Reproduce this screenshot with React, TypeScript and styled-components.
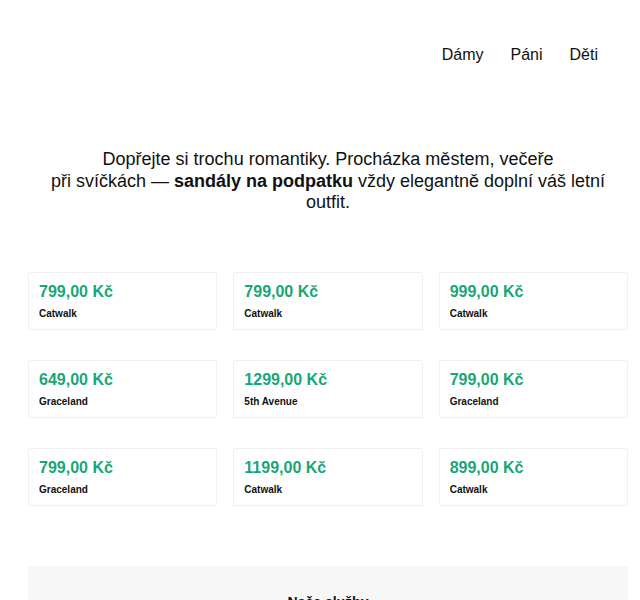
import React from "react"
import styled, { createGlobalStyle } from "styled-components"

const GlobalStyle = createGlobalStyle`
  html, body {
    margin: 0;
    padding: 0;
    background: #fff;
    font-family: "Liberation Sans", Arial, sans-serif;
    color: #111;
  }
`

const Page = styled.div`
  width: 600px;
  margin-left: 28px;
`

const Header = styled.header`
  display: flex;
  justify-content: flex-end;
  padding: 46px 30px 0 0;
  height: 80px;
  box-sizing: border-box;
`

const Nav = styled.nav`
  display: flex;
  gap: 27px;
`

const NavLink = styled.a`
  font-size: 16px;
  color: #111;
  text-decoration: none;
`

const Intro = styled.p`
  margin: 69px 0 0;
  text-align: center;
  font-size: 18px;
  line-height: 21.5px;

  strong {
    font-weight: bold;
  }
`

const Grid = styled.section`
  display: grid;
  grid-template-columns: repeat(3, 1fr);
  column-gap: 16px;
  row-gap: 30px;
  margin-top: 58px;
`

const Card = styled.div`
  height: 58px;
  box-sizing: border-box;
  border: 1px solid #f0f0f0;
  border-radius: 2px;
  padding: 9px 10px 0;
`

const Price = styled.div`
  font-size: 16px;
  font-weight: bold;
  color: #17a776;
  line-height: 19px;
`

const Brand = styled.div`
  margin-top: 7px;
  font-size: 10px;
  font-weight: bold;
  color: #111;
`

const Services = styled.section`
  margin-top: 60px;
  background: #f7f7f7;
  height: 120px;
  padding-top: 28px;
  box-sizing: border-box;
  text-align: center;
`

const ServicesTitle = styled.h2`
  margin: 0;
  font-size: 14px;
  font-weight: bold;
`

const products = [
  { price: "799,00 Kč", brand: "Catwalk" },
  { price: "799,00 Kč", brand: "Catwalk" },
  { price: "999,00 Kč", brand: "Catwalk" },
  { price: "649,00 Kč", brand: "Graceland" },
  { price: "1299,00 Kč", brand: "5th Avenue" },
  { price: "799,00 Kč", brand: "Graceland" },
  { price: "799,00 Kč", brand: "Graceland" },
  { price: "1199,00 Kč", brand: "Catwalk" },
  { price: "899,00 Kč", brand: "Catwalk" },
]

export default function App() {
  return (
    <>
      <GlobalStyle />
      <Page>
        <Header>
          <Nav>
            <NavLink href="#">Dámy</NavLink>
            <NavLink href="#">Páni</NavLink>
            <NavLink href="#">Děti</NavLink>
          </Nav>
        </Header>
        <Intro>
          Dopřejte si trochu romantiky. Procházka městem, večeře
          <br />
          při svíčkách — <strong>sandály na podpatku</strong> vždy elegantně doplní váš letní outfit.
        </Intro>
        <Grid>
          {products.map((p, i) => (
            <Card key={i}>
              <Price>{p.price}</Price>
              <Brand>{p.brand}</Brand>
            </Card>
          ))}
        </Grid>
        <Services>
          <ServicesTitle>Naše služby</ServicesTitle>
        </Services>
      </Page>
    </>
  )
}
